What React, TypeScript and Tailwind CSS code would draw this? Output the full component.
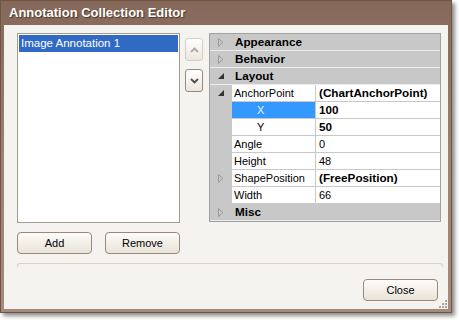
import React from "react";

const font = { fontFamily: '"Liberation Sans", Arial, sans-serif' };

type Row =
  | { kind: "cat"; label: string; open?: boolean }
  | { kind: "prop"; name: string; value: string; bold?: boolean; indent?: boolean; selected?: boolean; arrow?: "open" | "closed" };

const rows: Row[] = [
  { kind: "cat", label: "Appearance" },
  { kind: "cat", label: "Behavior" },
  { kind: "cat", label: "Layout", open: true },
  { kind: "prop", name: "AnchorPoint", value: "(ChartAnchorPoint)", bold: true, arrow: "open" },
  { kind: "prop", name: "X", value: "100", bold: true, indent: true, selected: true },
  { kind: "prop", name: "Y", value: "50", bold: true, indent: true },
  { kind: "prop", name: "Angle", value: "0" },
  { kind: "prop", name: "Height", value: "48" },
  { kind: "prop", name: "ShapePosition", value: "(FreePosition)", bold: true, arrow: "closed" },
  { kind: "prop", name: "Width", value: "66" },
  { kind: "cat", label: "Misc" },
];

// small glyphs used in the property grid gutter
function Closed() {
  return (
    <svg width="6" height="9" viewBox="0 0 6 9">
      <path d="M0.5 0.5 L5 4.5 L0.5 8.5 Z" fill="none" stroke="#9a9a9a" strokeWidth="1" />
    </svg>
  );
}

function Open() {
  return (
    <svg width="6" height="6" viewBox="0 0 6 6">
      <path d="M6 0 L6 6 L0 6 Z" fill="#333" />
    </svg>
  );
}

function SideButton({ dir, enabled }: { dir: "up" | "down"; enabled?: boolean }) {
  return (
    <div
      className={`w-[18px] h-[23px] rounded-[3px] border flex items-center justify-center bg-gradient-to-b from-[#ffffff] to-[#ece7de] ${
        enabled ? "border-[#9c8878]" : "border-[#d4cdc4]"
      }`}
    >
      <svg width="9" height="6" viewBox="0 0 9 6">
        <path
          d={dir === "up" ? "M1 5 L4.5 1.5 L8 5" : "M1 1 L4.5 4.5 L8 1"}
          fill="none"
          stroke={enabled ? "#4d4d4d" : "#a9a9a9"}
          strokeWidth="1.8"
        />
      </svg>
    </div>
  );
}

function Btn({ label, w }: { label: string; w: string }) {
  return (
    <div
      className={`${w} h-[22px] rounded-[4px] border border-[#9c8878] bg-gradient-to-b from-[#fdfcfa] to-[#e9e3d8] flex items-center justify-center text-[11px] text-black`}
    >
      {label}
    </div>
  );
}

export default function App() {
  return (
    <div className="w-[459px] h-[322px] bg-white relative" style={font}>
      <div className="w-[452px] h-[313px] bg-gradient-to-b from-[#85685a] via-[#9d8172] to-[#a48b7d] border border-[#6e5546] shadow-[3px_3px_4px_rgba(0,0,0,0.45)] flex flex-col">
        {/* title bar */}
        <div className="h-[24px] flex items-center pl-[8px] text-white font-bold text-[13px] [text-shadow:1px_1px_1px_rgba(60,40,30,0.8)]">
          Annotation Collection Editor
        </div>

        {/* body */}
        <div className="flex-1 mx-[3px] mb-[3px] bg-[#f5f3ef] flex flex-col pl-[13px] pr-[7px] pt-[8px] relative">
          <div className="flex h-[190px]">
            {/* list */}
            <div className="w-[163px] h-full border border-[#a59b91] bg-white p-[1px]">
              <div className="h-[17px] bg-[#316ac5] text-white text-[11.5px] pl-[2px] leading-[17px]">
                Image Annotation 1
              </div>
            </div>

            {/* up / down */}
            <div className="ml-[5px] pt-[5px] flex flex-col gap-[8px]">
              <SideButton dir="up" />
              <SideButton dir="down" enabled />
            </div>

            {/* property grid */}
            <div className="ml-[6px] w-[232px] h-[189px] border border-[#a0a0a0] bg-[#c8c8c8] text-[11px] text-black">
              {rows.map((r, i) =>
                r.kind === "cat" ? (
                  <div key={i} className="h-[17px] flex items-center border-b border-[#ececec]">
                    <div className="w-[22px] flex items-center justify-center">
                      {r.open ? <Open /> : <Closed />}
                    </div>
                    <span className="font-bold text-[11.7px] pl-[3px]">{r.label}</span>
                  </div>
                ) : (
                  <div key={i} className="h-[17px] flex border-b border-[#c8c8c8]">
                    <div className="w-[22px] flex items-center justify-center">
                      {r.arrow === "open" ? <Open /> : r.arrow === "closed" ? <Closed /> : null}
                    </div>
                    <div
                      className={`w-[84px] flex items-center border-r border-[#c8c8c8] ${
                        r.selected ? "bg-[#3399ff] text-[#e8f2ff]" : "bg-white"
                      } ${r.indent ? "pl-[25px]" : "pl-[2px]"}`}
                    >
                      {r.name}
                    </div>
                    <div className={`flex-1 bg-white flex items-center pl-[3px] ${r.bold ? "font-bold text-[11.7px]" : ""}`}>
                      {r.value}
                    </div>
                  </div>
                )
              )}
            </div>
          </div>

          {/* add / remove */}
          <div className="flex gap-[13px] mt-[9px]">
            <Btn label="Add" w="w-[75px]" />
            <Btn label="Remove" w="w-[75px]" />
          </div>

          {/* group separator */}
          <div className="mt-[9px] mr-[-2px] h-[4px] border-t border-l border-r border-[#d9d0c3] rounded-t-[3px]" />

          <div className="flex justify-end mt-[12px] pr-[3px]">
            <Btn label="Close" w="w-[75px]" />
          </div>

          {/* size grip */}
          <div className="absolute right-[1px] bottom-[1px] grid grid-cols-3 gap-[1px]">
            <span className="w-[2px] h-[2px]" />
            <span className="w-[2px] h-[2px]" />
            <span className="w-[2px] h-[2px] bg-[#b3a596]" />
            <span className="w-[2px] h-[2px]" />
            <span className="w-[2px] h-[2px] bg-[#b3a596]" />
            <span className="w-[2px] h-[2px] bg-[#b3a596]" />
            <span className="w-[2px] h-[2px] bg-[#b3a596]" />
            <span className="w-[2px] h-[2px] bg-[#b3a596]" />
            <span className="w-[2px] h-[2px] bg-[#b3a596]" />
          </div>
        </div>
      </div>
    </div>
  );
}
